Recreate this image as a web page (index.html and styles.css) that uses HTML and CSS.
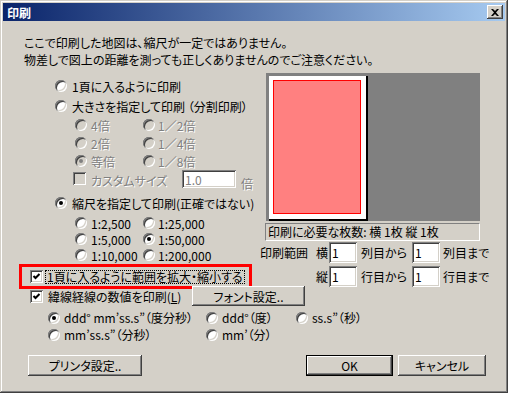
FILE: index.html
```html
<!DOCTYPE html>
<html lang="ja">
<head>
    <meta charset="UTF-8">
    <title>印刷</title>
    <link rel="stylesheet" href="styles.css">
</head>
<body>
<div class="window">
    <div class="titlebar">
        <span class="title">印刷</span>
        <span class="close-btn">
            <svg width="8" height="7" viewBox="0 0 8 7"><path d="M0 0h2l2 2 2-2h2L5 3.5 8 7H6L4 5 2 7H0l3-3.5z" fill="#000"/></svg>
        </span>
    </div>

    <div class="content">
        <p class="intro">ここで印刷した地図は、縮尺が一定ではありません。<br>物差しで図上の距離を測っても正しくありませんのでご注意ください。</p>

        <div class="main">
            <div class="options">
                <div class="opt head"><span class="radio"></span>1頁に入るように印刷</div>
                <div class="opt head"><span class="radio"></span>大きさを指定して印刷 （分割印刷）</div>

                <div class="sub-grid size-grid disabled">
                    <div class="opt"><span class="radio"></span>4倍</div>
                    <div class="opt"><span class="radio"></span>1／2倍</div>
                    <div class="opt"><span class="radio"></span>2倍</div>
                    <div class="opt"><span class="radio"></span>1／4倍</div>
                    <div class="opt"><span class="radio checked"></span>等倍</div>
                    <div class="opt"><span class="radio"></span>1／8倍</div>
                </div>

                <div class="custom disabled">
                    <span class="check"></span>
                    <span class="custom-label">カスタムサイズ</span>
                    <span class="field custom-field">1.0</span>
                    <span class="unit">倍</span>
                </div>

                <div class="opt head scale-head"><span class="radio checked"></span>縮尺を指定して印刷(正確ではない)</div>

                <div class="sub-grid scale-grid">
                    <div class="opt"><span class="radio"></span>1:2,500</div>
                    <div class="opt"><span class="radio"></span>1:25,000</div>
                    <div class="opt"><span class="radio"></span>1:5,000</div>
                    <div class="opt"><span class="radio checked"></span>1:50,000</div>
                    <div class="opt"><span class="radio"></span>1:10,000</div>
                    <div class="opt"><span class="radio"></span>1:200,000</div>
                </div>

                <div class="fit-box">
                    <span class="check checked">
                        <svg width="9" height="9" viewBox="0 0 9 9"><path d="M1.5 4l2 2 4-4" stroke="#000" stroke-width="2" fill="none"/></svg>
                    </span>
                    <span class="focus">1頁に入るように範囲を拡大・縮小する</span>
                </div>
            </div>

            <div class="preview-col">
                <div class="preview">
                    <div class="page"><div class="area"></div></div>
                </div>
                <div class="sheets">印刷に必要な枚数: 横 1枚 縦 1枚</div>
                <div class="range">
                    <span>印刷範囲</span>
                    <span>横</span>
                    <span class="field">1</span>
                    <span class="range-text">列目から</span>
                    <span class="field">1</span>
                    <span class="range-text end">列目まで</span>

                    <span></span>
                    <span>縦</span>
                    <span class="field">1</span>
                    <span class="range-text">行目から</span>
                    <span class="field">1</span>
                    <span class="range-text end">行目まで</span>
                </div>
            </div>
        </div>

        <div class="latlon-row">
            <div class="latlon-label">
                <span class="check checked">
                    <svg width="9" height="9" viewBox="0 0 9 9"><path d="M1.5 4l2 2 4-4" stroke="#000" stroke-width="2" fill="none"/></svg>
                </span>
                <span>緯線経線の数値を印刷(<u>L</u>)</span>
            </div>
            <span class="btn font-btn">フォント設定..</span>
        </div>

        <div class="format-grid">
            <div class="opt"><span class="radio checked"></span>ddd° mm’ss.s”（度分秒）</div>
            <div class="opt"><span class="radio"></span>ddd°（度）</div>
            <div class="opt"><span class="radio"></span>ss.s”（秒）</div>
            <div class="opt"><span class="radio"></span>mm’ss.s”（分秒）</div>
            <div class="opt"><span class="radio"></span>mm’（分）</div>
        </div>

        <div class="buttons">
            <span class="btn printer-btn">プリンタ設定..</span>
            <span class="btn default ok-btn">OK</span>
            <span class="btn cancel-btn">キャンセル</span>
        </div>
    </div>
</div>
</body>
</html>
```

FILE: styles.css
```css
body {
    margin: 0;
    background: #d4d0c8;
}
.window {
    width: 508px;
    height: 393px;
    box-sizing: border-box;
    padding: 3px;
    overflow: hidden;
    background: #d4d0c8;
    box-shadow: inset -1px -1px #404040, inset 1px 1px #d4d0c8, inset -2px -2px #808080, inset 2px 2px #fff;
    font-family: "Noto Sans CJK JP", sans-serif;
    font-size: 12px;
    font-feature-settings: "palt";
    color: #000;
}

/* title bar */
.titlebar {
    height: 18px;
    display: flex;
    align-items: center;
    padding: 0 2px;
    background: linear-gradient(to right, #0a246a, #a6caf0);
}
.title {
    color: #fff;
    font-weight: bold;
    margin-left: 2px;
}
.close-btn {
    width: 16px;
    height: 14px;
    margin-left: auto;
    display: flex;
    align-items: center;
    justify-content: center;
    background: #d4d0c8;
    box-shadow: inset -1px -1px #404040, inset 1px 1px #fff, inset -2px -2px #808080, inset 2px 2px #d4d0c8;
}

/* content */
.content {
    padding: 13px 0 0 16px;
}
.intro {
    margin: 0 0 0 5px;
    line-height: 17px;
}
.main {
    display: flex;
    margin-top: 5px;
}
.options {
    width: 241px;
    flex: none;
}

/* radios & checks */
.opt {
    display: flex;
    align-items: center;
    gap: 4px;
    white-space: nowrap;
}
.radio {
    width: 12px;
    height: 12px;
    flex: none;
    border-radius: 50%;
    background: #fff;
    box-shadow: inset 1px 1px #808080, inset -1px -1px #fff, inset 2px 2px #404040, inset -2px -2px #d4d0c8;
    display: inline-flex;
    align-items: center;
    justify-content: center;
}
.radio.checked::after {
    content: "";
    width: 4px;
    height: 4px;
    border-radius: 50%;
    background: #000;
}
.check {
    width: 13px;
    height: 13px;
    flex: none;
    box-sizing: border-box;
    padding: 2px;
    background: #fff;
    box-shadow: inset 1px 1px #808080, inset -1px -1px #fff, inset 2px 2px #404040, inset -2px -2px #d4d0c8;
    display: inline-flex;
}
.check svg { display: block; }

.disabled {
    color: #808080;
    text-shadow: 1px 1px #fff;
}
.disabled .radio,
.disabled .check {
    background: #d4d0c8;
}
.disabled .radio.checked::after {
    background: #808080;
}

.head {
    height: 20px;
    padding-left: 36px;
    gap: 5px;
}
.options > .head:first-child { margin-top: 3px; }

.sub-grid {
    display: grid;
    grid-template-columns: 68px auto;
    padding-left: 56px;
}
.size-grid { grid-auto-rows: 18px; }
.scale-grid {
    grid-auto-rows: 16px;
    margin-top: 2px;
}
.sub-grid .opt:nth-child(even) { gap: 3px; }

.custom {
    height: 20px;
    display: flex;
    align-items: center;
    padding-left: 54px;
}
.custom .check { margin-top: -4px; }
.custom-label {
    margin-left: 5px;
    width: 91px;
}
.custom-field {
    width: 54px;
    height: 18px;
    margin-top: -2px;
    background: #d4d0c8;
    text-shadow: none;
}
.unit {
    align-self: flex-end;
    line-height: 12px;
    margin-left: 5px;
}
.scale-head { margin-top: 3px; }

.fit-box {
    width: 233px;
    height: 25px;
    box-sizing: border-box;
    margin-top: 1px;
    border: 3px solid #f00;
    display: flex;
    align-items: center;
    padding-left: 8px;
    white-space: nowrap;
}
.focus {
    margin-left: 3px;
    padding: 0 1px;
    line-height: 12px;
    outline: 1px dotted #000;
}

/* sunken field */
.field {
    box-sizing: border-box;
    display: flex;
    align-items: center;
    padding-left: 3px;
    background: #fff;
    box-shadow: inset 1px 1px #808080, inset -1px -1px #fff, inset 2px 2px #404040, inset -2px -2px #d4d0c8;
}

/* preview */
.preview-col {
    width: 240px;
    flex: none;
}
.preview {
    width: 214px;
    height: 148px;
    margin-left: 6px;
    box-sizing: border-box;
    padding: 3px 0 0 3px;
    background: #808080;
}
.page {
    width: 99px;
    height: 145px;
    box-sizing: border-box;
    padding: 4px 0 0 4px;
    background: #fff;
    border-right: 2px solid #000;
    border-bottom: 2px solid #000;
}
.area {
    width: 88px;
    height: 134px;
    box-sizing: border-box;
    border: 1px solid #f00;
    background: #ff8080;
}
.sheets {
    width: 215px;
    height: 18px;
    box-sizing: border-box;
    margin: 2px 0 0 5px;
    padding-left: 2px;
    line-height: 16px;
    border: 1px solid;
    border-color: #808080 #fff #fff #808080;
    white-space: nowrap;
}
.range {
    display: grid;
    grid-template-columns: 56px 13px 28px 55px 28px auto;
    grid-auto-rows: 21px;
    row-gap: 3px;
    align-items: center;
    margin-top: 1px;
    white-space: nowrap;
}
.range .field { height: 21px; }
.range-text { padding-left: 4px; }
.range-text.end { padding-left: 3px; }

/* lat/lon */
.latlon-row {
    display: flex;
    align-items: center;
    height: 20px;
    margin-top: -3px;
}
.latlon-label {
    width: 173px;
    box-sizing: border-box;
    padding-left: 11px;
    display: flex;
    align-items: center;
    gap: 5px;
    white-space: nowrap;
}
.latlon-label .check { margin-top: 1px; }

.btn {
    display: flex;
    align-items: center;
    justify-content: center;
    box-sizing: border-box;
    background: #d4d0c8;
    box-shadow: inset -1px -1px #404040, inset 1px 1px #fff, inset -2px -2px #808080, inset 2px 2px #d4d0c8;
    white-space: nowrap;
}
.font-btn {
    width: 113px;
    height: 20px;
}

.format-grid {
    display: grid;
    grid-template-columns: 158px 90px auto;
    grid-auto-rows: 17px;
    margin-top: 3px;
    padding-left: 29px;
}

.buttons {
    display: flex;
    margin-top: 12px;
    padding-left: 9px;
}
.buttons .btn { height: 21px; }
.printer-btn { width: 114px; }
.ok-btn {
    width: 87px;
    margin-left: 164px;
}
.btn.default {
    border: 1px solid #000;
    box-shadow: inset -1px -1px #404040, inset 1px 1px #fff, inset -2px -2px #808080, inset 2px 2px #d4d0c8;
}
.cancel-btn {
    width: 88px;
    margin-left: 5px;
}
```
